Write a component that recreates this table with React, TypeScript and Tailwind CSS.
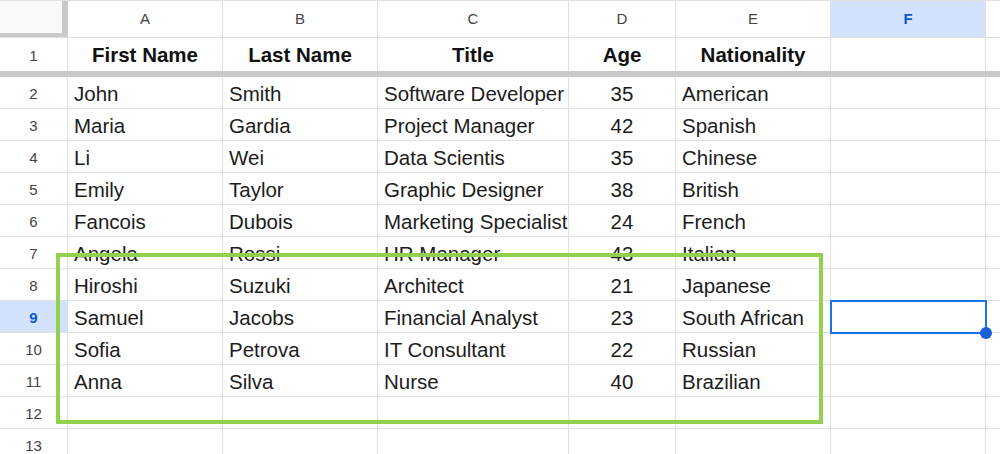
import React from "react";

const cols = [
  { key: "A", w: "w-[155px]", center: false },
  { key: "B", w: "w-[155px]", center: false },
  { key: "C", w: "w-[191px]", center: false },
  { key: "D", w: "w-[107px]", center: true },
  { key: "E", w: "w-[155px]", center: false },
  { key: "F", w: "w-[155px]", center: false },
];

const headers = ["First Name", "Last Name", "Title", "Age", "Nationality", ""];

const rows: string[][] = [
  ["John", "Smith", "Software Developer", "35", "American"],
  ["Maria", "Gardia", "Project Manager", "42", "Spanish"],
  ["Li", "Wei", "Data Scientis", "35", "Chinese"],
  ["Emily", "Taylor", "Graphic Designer", "38", "British"],
  ["Fancois", "Dubois", "Marketing Specialist", "24", "French"],
  ["Angela", "Rossi", "HR Manager", "43", "Italian"],
  ["Hiroshi", "Suzuki", "Architect", "21", "Japanese"],
  ["Samuel", "Jacobs", "Financial Analyst", "23", "South African"],
  ["Sofia", "Petrova", "IT Consultant", "22", "Russian"],
  ["Anna", "Silva", "Nurse", "40", "Brazilian"],
  ["", "", "", "", ""],
  ["", "", "", "", ""],
];

const RowHead = ({ n, active }: { n: number; active?: boolean }) => (
  <div
    className={`w-[68px] shrink-0 flex items-center justify-center pt-[3px] border-r border-[#e1e1e1] text-[15px] ${
      active ? "bg-[#d3e3fd] text-[#0b57d0] font-bold" : "text-[#444]"
    }`}
  >
    {n}
  </div>
);

export default function App() {
  return (
    <div className="relative w-[1000px] h-[454px] overflow-hidden bg-white font-['Liberation_Sans',Arial,sans-serif] text-[#1c1c1c]">
      {/* column letters */}
      <div className="flex h-[38px] border-t border-[#e1e1e1] border-b">
        <div className="w-[68px] shrink-0 bg-[#f8f9fa] border-r-[6px] border-b-[4px] border-[#c9c9c9]" />
        {cols.map((c) => (
          <div
            key={c.key}
            className={`${c.w} shrink-0 flex items-center justify-center border-r border-[#e1e1e1] text-[15px] ${
              c.key === "F" ? "bg-[#d3e3fd] text-[#0b57d0] font-bold" : "text-[#444]"
            }`}
          >
            {c.key}
          </div>
        ))}
        <div className="flex-1" />
      </div>

      {/* header row 1 */}
      <div className="flex h-[33px]">
        <RowHead n={1} />
        {cols.map((c, i) => (
          <div
            key={c.key}
            className={`${c.w} shrink-0 flex items-center justify-center pt-[2px] border-r border-[#e1e1e1] text-[20.5px] font-bold text-[#111]`}
          >
            {headers[i]}
          </div>
        ))}
        <div className="flex-1" />
      </div>

      {/* frozen divider */}
      <div className="h-[6px] bg-[#c9c9c9]" />

      {rows.map((r, ri) => {
        const n = ri + 2;
        return (
          <div key={n} className="flex h-[32px] border-b border-[#e1e1e1]">
            <RowHead n={n} active={n === 9} />
            {cols.map((c, ci) => (
              <div
                key={c.key}
                className={`${c.w} shrink-0 flex items-center px-[6px] pt-[4px] border-r border-[#e1e1e1] text-[20.5px] whitespace-nowrap overflow-hidden ${
                  c.center ? "justify-center" : ""
                }`}
              >
                {r[ci] ?? ""}
              </div>
            ))}
            <div className="flex-1" />
          </div>
        );
      })}

      {/* selected cell F9 */}
      <div className="absolute left-[830px] top-[300px] w-[157px] h-[34px] border-2 border-[#1a73e8]" />
      <div className="absolute left-[980px] top-[327px] w-[12px] h-[12px] rounded-full bg-[#1a5fd8]" />

      {/* highlight box */}
      <div className="absolute left-[56px] top-[253px] w-[767px] h-[171px] border-[4px] border-[#92d050]" />
    </div>
  );
}
